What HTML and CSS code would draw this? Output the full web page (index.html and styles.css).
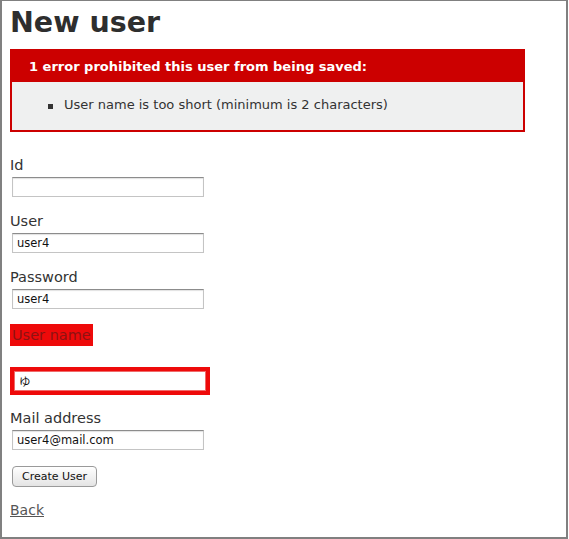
FILE: index.html
```html
<!DOCTYPE html>
<html>
<head>
<meta charset="utf-8">
<title>Users: new</title>
<link rel="stylesheet" href="styles.css">
</head>
<body>
<div class="frame">
  <h1 class="title">New user</h1>
  <div class="error-explanation">
    <h2 class="error-head">1 error prohibited this user from being saved:</h2>
    <ul class="error-list">
      <li class="error-item">User name is too short (minimum is 2 characters)</li>
    </ul>
  </div>
  <form class="user-form">
    <div class="field">
      <label class="lbl">Id</label>
      <input class="txt" type="text" value="">
    </div>
    <div class="field">
      <label class="lbl">User</label>
      <input class="txt" type="text" value="user4">
    </div>
    <div class="field">
      <label class="lbl">Password</label>
      <input class="txt" type="text" value="user4">
    </div>
    <div class="field field-error">
      <div class="err-label-wrap"><label class="lbl lbl-error">User name</label></div>
      <div class="err-input-wrap"><input class="txt txt-error" type="text" value="ゆ"></div>
    </div>
    <div class="field field-mail">
      <label class="lbl">Mail address</label>
      <input class="txt" type="text" value="user4@mail.com">
    </div>
    <div class="actions">
      <button class="btn" type="button">Create User</button>
    </div>
  </form>
  <a class="back" href="#">Back</a>
</div>
</body>
</html>
```

FILE: styles.css
```css
html, body {
  margin: 0;
  padding: 0;
  background: #ffffff;
}

.frame {
  box-sizing: border-box;
  width: 568px;
  height: 539px;
  border: 2px solid #808080;
  border-top-width: 1px;
  padding: 5px 0 0 8px;
  font-family: "DejaVu Sans", Verdana, sans-serif;
  color: #333333;
  display: flex;
  flex-direction: column;
  align-items: flex-start;
}

.title {
  margin: 0;
  font-size: 28.5px;
  line-height: 34px;
  font-weight: bold;
  color: #2e2e2e;
}

.error-explanation {
  box-sizing: border-box;
  width: 515px;
  margin-top: 9px;
  border: 2px solid #cc0000;
  background: #eff0f0;
}

.error-head {
  margin: 0;
  padding: 7px 0 6px 17px;
  background: #cc0000;
  color: #ffffff;
  font-size: 13px;
  line-height: 18px;
  font-weight: bold;
}

.error-list {
  margin: 0;
  padding: 14px 0 16px 36px;
  list-style: none;
}

.error-item {
  display: flex;
  align-items: center;
  font-size: 13px;
  line-height: 18px;
  color: #333333;
}

.error-item::before {
  content: "";
  width: 5px;
  height: 5px;
  margin: 3px 11px 0 0;
  background: #333333;
}

.user-form {
  margin-top: 24px;
  display: flex;
  flex-direction: column;
  align-items: flex-start;
}

.field {
  display: flex;
  flex-direction: column;
  align-items: flex-start;
  margin-bottom: 15px;
}

.lbl {
  font-size: 14.5px;
  line-height: 18px;
  color: #333333;
}

.txt {
  box-sizing: border-box;
  width: 192px;
  height: 20px;
  margin: 3px 0 0 2px;
  padding: 0 0 0 4px;
  border: 1px solid #c4c4c4;
  border-top-color: #8c8c8c;
  box-shadow: inset 0 1px 1px rgba(0, 0, 0, 0.12);
  background: #ffffff;
  font-family: "DejaVu Sans", "Noto Sans CJK JP", sans-serif;
  font-size: 11.5px;
  color: #111111;
  outline: none;
}

.err-label-wrap {
  padding: 2px;
  background: #ee0a0a;
}

.lbl-error {
  display: block;
  color: #8e1212;
}

.err-input-wrap {
  margin-top: 21px;
  padding: 4px;
  background: #ee0a0a;
}

.txt-error {
  margin: 0;
  border-color: #f06a6a;
  box-shadow: none;
}

.field-error {
  margin-bottom: 14px;
}

.field-mail {
  margin-bottom: 15px;
}

.actions {
  margin-left: 2px;
}

.btn {
  box-sizing: border-box;
  height: 21px;
  padding: 1px 9px 0;
  border: 1px solid #9a9a9a;
  border-radius: 4px;
  background: linear-gradient(#ffffff, #e4e4e4);
  font-family: "DejaVu Sans", sans-serif;
  font-size: 11px;
  line-height: 18px;
  color: #111111;
}

.back {
  margin-top: 14px;
  font-size: 14px;
  line-height: 18px;
  color: #555555;
  text-decoration: underline;
}
```
